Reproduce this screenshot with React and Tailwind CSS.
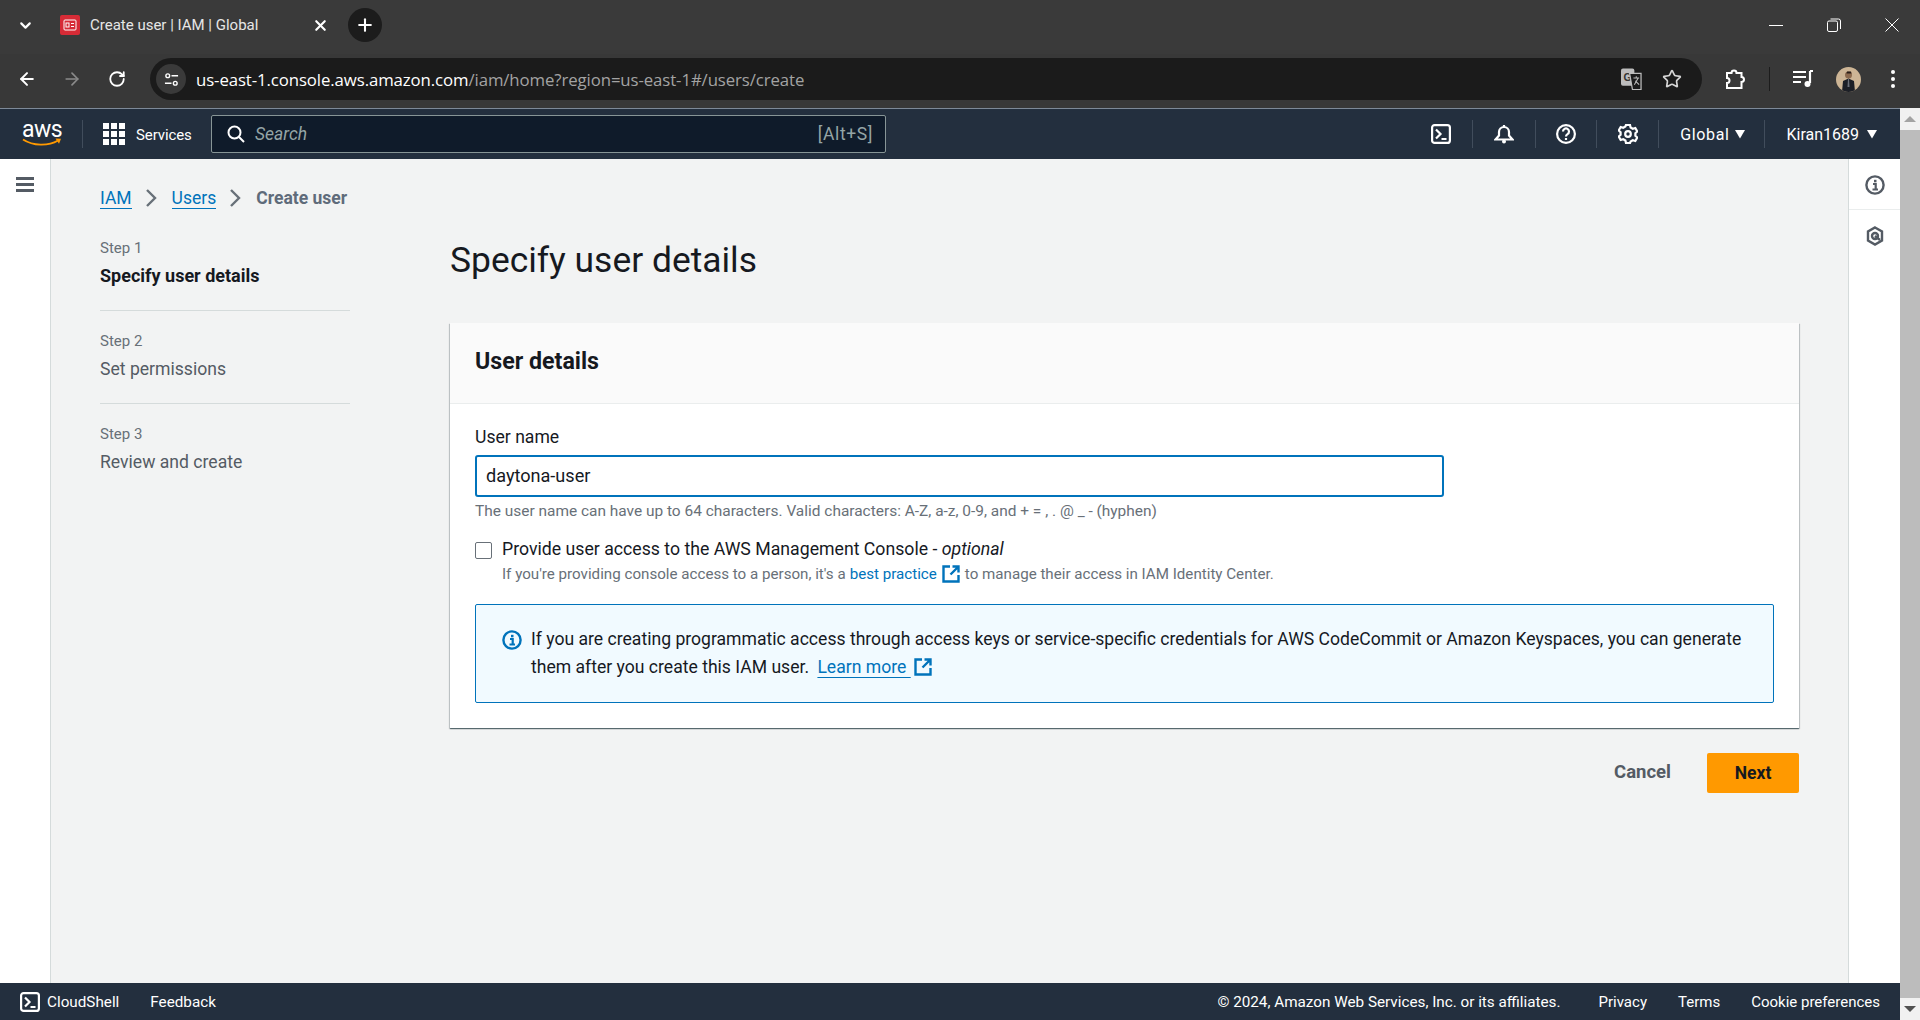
import { ArrowLeft, ArrowRight, ChevronDown, Plus, RotateCw, Star, X } from "lucide-react";

const steps = [
  { label: "Step 1", title: "Specify user details", active: true },
  { label: "Step 2", title: "Set permissions" },
  { label: "Step 3", title: "Review and create" },
];

function ExternalIcon({ className }) {
  return (
    <svg viewBox="0 0 18 18" fill="none" stroke="#0073bb" strokeWidth="2.400" className={className}>
      <path d="M8 1.500H1.500v15h15V10" />
      <path d="M10.500 1.500h6v6M16 2L8.500 9.500" />
    </svg>
  );
}

function InfoIcon({ color = "#0073bb", className }) {
  return (
    <svg viewBox="0 0 20 20" fill="none" className={className}>
      <circle cx="10" cy="10" r="8.600" stroke={color} strokeWidth="2.400" />
      <path d="M8 9h2.700v5M7.500 14.500h5.500" stroke={color} strokeWidth="2.200" />
      <rect x="9" y="4.800" width="2.500" height="2.500" fill={color} />
    </svg>
  );
}

function ShellIcon({ className }) {
  return (
    <svg viewBox="0 0 20 20" fill="none" stroke="#fff" strokeWidth="2.200" className={className}>
      <rect x="1.100" y="1.100" width="17.800" height="17.800" rx="2.500" />
      <path d="M5 5.500l4.500 4.500L5 14.500M10.500 15H15.500" />
    </svg>
  );
}

function Caret({ className }) {
  return (
    <svg viewBox="0 0 10 10" className={className}>
      <path d="M0 1h10L5 9.500z" fill="#fff" />
    </svg>
  );
}

function NavDivider() {
  return <div className="h-[28px] w-px bg-[#414d5c]" />;
}

function CrumbChevron() {
  return (
    <svg viewBox="0 0 12 18" fill="none" stroke="#687078" strokeWidth="2.400" className="ml-[13px] mr-[15px] h-[18px] w-[12px]">
      <path d="M2 1l8 8-8 8" />
    </svg>
  );
}

function TabStrip() {
  return (
    <div className="flex h-[54px] items-center bg-[#3a3a3a] pb-[4px] text-[#e6e6e6]">
      <ChevronDown size={17} strokeWidth={3} className="ml-[17px] text-white" />
      <svg viewBox="0 0 20 20" className="ml-[26px] h-[20px] w-[20px]">
        <rect width="20" height="20" rx="2" fill="#d62b36" />
        <rect x="4" y="5" width="12" height="10" rx="1" fill="none" stroke="#fff" strokeWidth="1" />
        <rect x="6" y="8" width="3" height="4" fill="none" stroke="#fff" strokeWidth="1" />
        <path d="M11 8.500h3M11 11.500h3" stroke="#fff" strokeWidth="1" />
      </svg>
      <span className="ml-[10px] w-[222px] text-[15px]">Create user | IAM | Global</span>
      <X size={17} strokeWidth={3} className="text-white" />
      <div className="ml-[19px] flex h-[34px] w-[34px] items-center justify-center rounded-full bg-[#1c1c1c]">
        <Plus size={20} strokeWidth={2.5} className="text-white" />
      </div>
      <div className="ml-auto mr-[21px] flex items-center gap-[44px] text-white">
        <div className="h-px w-[14px] bg-white" />
        <svg viewBox="0 0 14 14" fill="none" stroke="#fff" strokeWidth="1" className="h-[14px] w-[14px]">
          <rect x="0.500" y="3" width="10" height="10.500" rx="1.500" />
          <path d="M3.500 1h8a2 2 0 0 1 2 2v8" />
        </svg>
        <svg viewBox="0 0 14 14" stroke="#fff" strokeWidth="1" className="h-[14px] w-[14px]">
          <path d="M0.500 0.500l13 13M13.500 0.500l-13 13" />
        </svg>
      </div>
    </div>
  );
}

function Toolbar() {
  return (
    <div className="flex h-[54px] items-center bg-[#383838] pb-[4px]">
      <ArrowLeft size={20} strokeWidth={2.4} className="ml-[17px] text-white" />
      <ArrowRight size={20} strokeWidth={2} className="ml-[25px] text-[#8a8a8a]" />
      <RotateCw size={18} strokeWidth={2.4} className="ml-[26px] text-white" />
      <div className="ml-[24px] flex h-[42px] w-[1552px] items-center rounded-full bg-[#1b1b1b] pl-[6px] pr-[20px]">
        <div className="flex h-[30px] w-[30px] items-center justify-center rounded-full bg-[#3a3a3a]">
          <svg viewBox="0 0 16 16" fill="none" stroke="#fff" strokeWidth="1.500" className="h-[15px] w-[15px]">
            <circle cx="4" cy="4" r="2" />
            <path d="M8 4h7M1 12h7" />
            <circle cx="12" cy="12" r="2" />
          </svg>
        </div>
        <p className="ml-[10px] mt-[2px] text-[16.800px] font-['Open_Sans',sans-serif] tracking-[-0.1px] text-white">
          us-east-1.console.aws.amazon.com<span className="text-[#a3a3a3]">/iam/home?region=us-east-1#/users/create</span>
        </p>
        <svg viewBox="0 0 22 24" className="ml-auto h-[24px] w-[21px]">
          <rect x="0" y="1" width="14" height="18" rx="2" fill="#bdbdbd" />
          <text x="2.500" y="14" fontSize="11" fontWeight="700" fill="#333" fontFamily="Liberation Sans, sans-serif">G</text>
          <path d="M9 6h12v17H12z" fill="#1b1b1b" stroke="#bdbdbd" strokeWidth="1.300" />
          <path d="M13 11h6M16 9v2M14 18l4-7M15 14l4 4" stroke="#bdbdbd" strokeWidth="1.100" fill="none" />
        </svg>
        <Star size={20} strokeWidth={2} className="ml-[20px] text-[#d6d6d6]" />
      </div>
      <svg viewBox="0 0 20 22" fill="none" stroke="#fff" strokeWidth="2" className="ml-[23px] h-[22px] w-[20px]">
        <path d="M2 5h4.500a2.500 2.500 0 0 1 5 0H16.500v4a2.500 2.500 0 0 1 0 5v6H2v-5a2.500 2.500 0 0 0 0-5z" />
      </svg>
      <div className="ml-[24px] h-[24px] w-px bg-[#1c1c1c]" />
      <svg viewBox="0 0 20 18" className="ml-[23px] h-[18px] w-[20px]">
        <path d="M0 2h13M0 7h13M0 12h8" stroke="#fff" strokeWidth="2" />
        <path d="M17 1v12" stroke="#fff" strokeWidth="2.200" />
        <path d="M17 1h3" stroke="#fff" strokeWidth="2" />
        <circle cx="14.500" cy="14" r="3" fill="#fff" />
      </svg>
      <div className="ml-[23px] h-[25px] w-[25px] overflow-hidden rounded-full bg-[#cdb595]">
        <svg viewBox="0 0 25 25" className="h-full w-full">
          <circle cx="12.500" cy="8" r="3.500" fill="#8c6a4e" />
          <path d="M11 4.500h4l.5 2h-5z" fill="#2a1e18" />
          <path d="M6 25l1-11 5.500-2.500L18 14l1 11z" fill="#1c1f26" />
          <path d="M12 12h1l.5 8h-2z" fill="#6b6f78" />
        </svg>
      </div>
      <div className="ml-[30px] flex flex-col gap-[3px]">
        <div className="h-[4px] w-[4px] rounded-full bg-white" />
        <div className="h-[4px] w-[4px] rounded-full bg-white" />
        <div className="h-[4px] w-[4px] rounded-full bg-white" />
      </div>
    </div>
  );
}

function TopNav() {
  return (
    <div className="flex h-[51px] shrink-0 items-center border-t border-[#7d8998] bg-[#232f3e] text-white">
      <div className="ml-[22px] flex w-[40px] flex-col items-center">
        <span className="text-[23px] leading-[17px] tracking-[-0.5px]">aws</span>
        <svg viewBox="0 0 40 10" className="h-[10px] w-[40px]">
          <path d="M1 1.500c10 6.500 25 7 35 1" fill="none" stroke="#ff9900" strokeWidth="1.800" />
          <path d="M33.500 0.500l5.500 0.200-2 5z" fill="#ff9900" />
        </svg>
      </div>
      <div className="ml-[20px] h-[28px] w-px bg-[#414d5c]" />
      <div className="ml-[20px] grid grid-cols-3 gap-[2px]">
        {Array.from({ length: 9 }).map((_, index) => (
          <div key={index} className="h-[6px] w-[6px] bg-white" />
        ))}
      </div>
      <span className="ml-[11px] mt-[2px] w-[54px] text-[15px] tracking-[-0.1px]">Services</span>
      <div className="ml-[21px] flex h-[38px] w-[675px] items-center rounded-[2px] border border-[#879596] bg-[#0f1b2a] pl-[15px] pr-[12px]">
        <svg viewBox="0 0 18 18" fill="none" stroke="#fff" strokeWidth="2" className="h-[18px] w-[18px]">
          <circle cx="7.500" cy="7.500" r="6" />
          <path d="M12 12l5 5" />
        </svg>
        <span className="ml-[10px] text-[17.500px] italic text-[#95a5a6]">Search</span>
        <span className="ml-auto text-[17.500px] tracking-[0.6px] text-[#95a5a6]">[Alt+S]</span>
      </div>
      <div className="ml-auto flex items-center">
        <ShellIcon className="h-[20px] w-[20px]" />
        <div className="ml-[21px]"><NavDivider /></div>
        <svg viewBox="0 0 20 20" fill="none" stroke="#fff" strokeWidth="2.200" className="ml-[21px] h-[22px] w-[20px]">
          <path d="M1.500 15.500h17l-3.500-4V8a5 5 0 0 0-10 0v3.500z" />
          <path d="M10 1v2" />
          <circle cx="10" cy="17.500" r="2" fill="#fff" stroke="none" />
        </svg>
        <div className="ml-[21px]"><NavDivider /></div>
        <svg viewBox="0 0 20 20" fill="none" stroke="#fff" strokeWidth="2.200" className="ml-[20px] h-[20px] w-[20px]">
          <circle cx="10" cy="10" r="8.900" />
          <path d="M7 7.500a3 3 0 1 1 4.500 2.600c-1 .6-1.500 1-1.500 2.400" />
          <path d="M10 14v2" />
        </svg>
        <div className="ml-[20px]"><NavDivider /></div>
        <svg viewBox="0 0 20 20" fill="none" stroke="#fff" strokeWidth="2.200" className="ml-[21px] h-[20px] w-[20px]">
          <path d="M8 1h4l.6 2.500 2.200 1.200 2.500-.7 2 3.500-1.900 1.800v2.400l1.900 1.800-2 3.500-2.500-.7-2.200 1.200L12 19H8l-.6-2.500-2.200-1.200-2.500.7-2-3.500 1.900-1.800V8.300L.7 6.500l2-3.500 2.500.7 2.200-1.200z" />
          <circle cx="10" cy="10" r="2.800" />
        </svg>
        <div className="ml-[20px]"><NavDivider /></div>
        <span className="ml-[21px] mt-[2px] text-[16px] tracking-[0.6px]">Global</span>
        <Caret className="ml-[6px] h-[10px] w-[10px]" />
        <div className="ml-[19px]"><NavDivider /></div>
        <span className="ml-[21px] mt-[2px] text-[16px]">Kiran1689</span>
        <Caret className="ml-[8px] mr-[23px] h-[10px] w-[10px]" />
      </div>
    </div>
  );
}

function Breadcrumbs() {
  return (
    <nav className="flex h-[78px] items-center text-[17.500px]">
      <a className="border-b border-[#0073bb] leading-[20px] text-[#0073bb]">IAM</a>
      <CrumbChevron />
      <a className="border-b border-[#0073bb] leading-[20px] text-[#0073bb]">Users</a>
      <CrumbChevron />
      <span className="font-bold text-[#5f6b7a]">Create user</span>
    </nav>
  );
}

function StepList() {
  return (
    <ol className="w-[250px] shrink-0">
      {steps.map((step, index) => (
        <li key={step.label} className={index < 2 ? "mb-[19px] h-[74px] border-b border-[#d5dbdb]" : ""}>
          <p className="text-[15px] leading-[22px] text-[#687078]">{step.label}</p>
          <p className={`mt-[6px] leading-[22px] ${step.active ? "text-[18px] font-bold text-[#16191f]" : "text-[17.600px] text-[#545b64]"}`}>
            {step.title}
          </p>
        </li>
      ))}
    </ol>
  );
}

function UserDetailsCard() {
  return (
    <section className="bg-white shadow-[0_1px_1px_0_rgba(0,28,36,0.5),1px_1px_1px_0_rgba(0,28,36,0.15),-1px_1px_1px_0_rgba(0,28,36,0.15)]">
      <div className="flex h-[81px] items-center border-b border-[#eaeded] bg-[#fafafa] px-[25px] pb-[4px]">
        <h2 className="text-[23.200px] font-bold text-[#16191f]">User details</h2>
      </div>
      <div className="px-[25px] pb-[25px] pt-[21px]">
        <label className="block text-[17.600px] leading-[24px] text-[#16191f]">User name</label>
        <div className="mt-[6px] flex h-[42px] w-[969px] items-center rounded-[3px] border-[2.500px] border-[#0073bb] bg-white px-[9px] text-[18.100px] text-[#16191f]">
          daytona-user
        </div>
        <p className="mt-[4px] text-[15.450px] leading-[20px] text-[#687078]">
          The user name can have up to 64 characters. Valid characters: A-Z, a-z, 0-9, and + = , . @ _ - (hyphen)
        </p>
        <div className="mt-[16px] flex">
          <div className="mt-[5px] h-[17px] w-[17px] shrink-0 rounded-[2px] border border-[#687078] bg-white" />
          <div className="ml-[10px]">
            <p className="text-[17.700px] leading-[24px] text-[#16191f]">
              Provide user access to the AWS Management Console - <em>optional</em>
            </p>
            <p className="mt-[2px] flex items-center text-[15.150px] leading-[22px] text-[#687078]">
              If you're providing console access to a person, it's a
              <a className="ml-[4px] text-[#0073bb]">best practice</a>
              <ExternalIcon className="ml-[5px] h-[18px] w-[18px]" />
              <span className="ml-[5px]">to manage their access in IAM Identity Center.</span>
            </p>
          </div>
        </div>
        <div className="mt-[19px] flex rounded-[2px] border border-[#0073bb] bg-[#f1faff] pb-[21px] pl-[26px] pr-[26px] pt-[20px]">
          <InfoIcon className="mt-[5px] h-[20px] w-[20px] shrink-0" />
          <p className="ml-[9px] text-[17.580px] leading-[28px] text-[#16191f]">
            If you are creating programmatic access through access keys or service-specific credentials for AWS CodeCommit or Amazon Keyspaces, you can generate them after you create this IAM user.{" "}
            <a className="ml-[4px] text-[#0073bb] underline underline-offset-4">Learn more </a>
            <ExternalIcon className="ml-[3px] inline h-[18px] w-[18px] align-[-3px]" />
          </p>
        </div>
      </div>
    </section>
  );
}

function PageFooter() {
  return (
    <footer className="flex h-[37px] shrink-0 items-center bg-[#232f3e] pt-[1px] text-[15px] text-white">
      <ShellIcon className="ml-[20px] h-[20px] w-[20px]" />
      <span className="ml-[7px] text-[15.250px]">CloudShell</span>
      <span className="ml-[31px] text-[15.250px]">Feedback</span>
      <span className="ml-auto text-[15.250px]">© 2024, Amazon Web Services, Inc. or its affiliates.</span>
      <span className="ml-[38px]">Privacy</span>
      <span className="ml-[31px]">Terms</span>
      <span className="ml-[31px] mr-[20px]">Cookie preferences</span>
    </footer>
  );
}

export default function App() {
  return (
    <div className="flex h-[1020px] w-[1920px] flex-col overflow-hidden font-['Roboto',sans-serif]">
      <TabStrip />
      <Toolbar />
      <div className="flex min-h-0 flex-1">
        <div className="flex w-[1900px] flex-col">
          <TopNav />
          <div className="flex min-h-0 flex-1">
            <aside className="w-[51px] shrink-0 border-r border-[#d5dbdb] bg-white pl-[16px] pt-[18px]">
              <div className="flex w-[18px] flex-col gap-[3px]">
                <div className="h-[3px] bg-[#545b64]" />
                <div className="h-[3px] bg-[#545b64]" />
                <div className="h-[3px] bg-[#545b64]" />
              </div>
            </aside>
            <main className="flex-1 bg-[#f2f3f3] pl-[49px] pr-[49px]">
              <Breadcrumbs />
              <div className="flex">
                <StepList />
                <div className="ml-[100px] flex-1">
                  <h1 className="-mt-[11px] h-[97px] pt-[12px] text-[35.400px] leading-[44px] text-[#16191f]">Specify user details</h1>
                  <UserDetailsCard />
                  <div className="mt-[25px] flex items-center justify-end">
                    <span className="text-[18.500px] font-bold text-[#545b64]">Cancel</span>
                    <button className="ml-[36px] h-[40px] w-[92px] rounded-[2px] bg-[#ff9900] text-[17.500px] font-bold text-[#16191f]">Next</button>
                  </div>
                </div>
              </div>
            </main>
            <aside className="w-[52px] shrink-0 border-l border-[#d5dbdb] bg-white">
              <div className="flex h-[51px] items-center justify-center border-b border-[#eaeded] pt-[1px]">
                <InfoIcon color="#545b64" className="h-[20px] w-[20px]" />
              </div>
              <div className="flex h-[52px] items-center justify-center">
                <svg viewBox="0 0 18 20" fill="none" stroke="#545b64" strokeWidth="2.400" className="h-[20px] w-[18px]">
                  <path d="M9 1.500l7 4v9l-7 4-7-4v-9z" />
                  <circle cx="9" cy="10" r="3" />
                  <path d="M9 10l5 4" />
                </svg>
              </div>
            </aside>
          </div>
          <PageFooter />
        </div>
        <div className="flex w-[20px] flex-col items-center bg-[#f1f1f1]">
          <div className="flex h-[22px] items-center justify-center">
            <div className="h-0 w-0 border-x-[6px] border-b-[6px] border-x-transparent border-b-[#a3a3a3]" />
          </div>
          <div className="h-[868px] w-full bg-[#bcbcbc]" />
          <div className="flex flex-1 items-center justify-center">
            <div className="h-0 w-0 border-x-[6px] border-t-[6px] border-x-transparent border-t-[#505050]" />
          </div>
        </div>
      </div>
    </div>
  );
}
